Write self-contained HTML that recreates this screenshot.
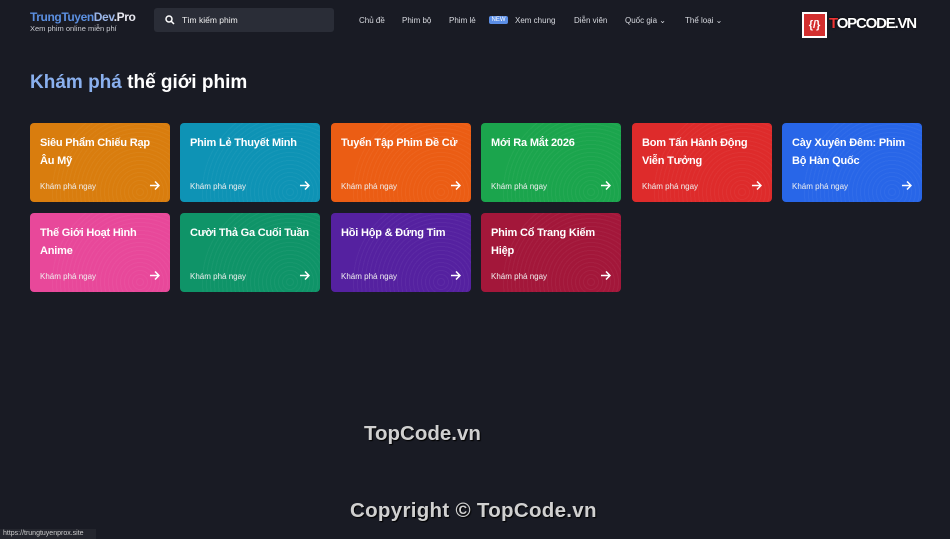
<!DOCTYPE html><html><head><meta charset="utf-8"><style>
*{margin:0;padding:0;box-sizing:border-box}
body{width:950px;height:539px;background:#191b24;font-family:"Liberation Sans",sans-serif;position:relative;overflow:hidden;color:#fff}
.a{position:absolute;white-space:nowrap}
.nav{font-size:8px;color:#d8dae0;top:16px}
.card{position:absolute;width:140px;height:79px;border-radius:4px;padding:11px 4px 11px 10px;overflow:hidden}
.card h3{font-size:11px;font-weight:bold;line-height:18px;color:#fff;white-space:nowrap;position:relative;letter-spacing:-.2px;z-index:1}
.card .k{position:absolute;left:10px;top:59px;font-size:8px;color:#f0f0f0;z-index:1}
.card svg{position:absolute;right:10px;top:58px;z-index:1}
.card:after{content:"";position:absolute;right:-60px;bottom:-80px;width:180px;height:180px;border-radius:50%;background:repeating-radial-gradient(circle,rgba(255,255,255,0) 0 3px,rgba(255,255,255,.04) 3px 4px)}
</style></head><body>
<div class="a" style="left:30px;top:10px;font-size:12px;font-weight:bold;letter-spacing:-.4px"><span style="color:#5b8fe0">TrungTuyen</span><span style="color:#9bb6e8">Dev</span><span style="color:#e8e8f0">.Pro</span></div>
<div class="a" style="left:30px;top:24px;font-size:7.5px;color:#c8cad0">Xem phim online miễn phí</div>
<div class="a" style="left:154px;top:8px;width:180px;height:24px;background:#2a2d37;border-radius:3px"></div>
<svg class="a" style="left:165px;top:15px" width="10" height="10" viewBox="0 0 10 10"><circle cx="4" cy="4" r="3" fill="none" stroke="#fff" stroke-width="1.5"/><path d="M6.3 6.3L9 9" stroke="#fff" stroke-width="1.5"/></svg>
<div class="a" style="left:182px;top:15px;font-size:8.5px;color:#f0f0f0">Tìm kiếm phim</div>
<div class="a nav" style="left:359px">Chủ đề</div>
<div class="a nav" style="left:402px">Phim bộ</div>
<div class="a nav" style="left:449px">Phim lẻ</div>
<div class="a" style="left:489px;top:16px;width:19px;height:8px;background:#5b8ee6;border-radius:2px;font-size:6px;color:#fff;text-align:center;line-height:8px">NEW</div>
<div class="a nav" style="left:515px">Xem chung</div>
<div class="a nav" style="left:574px">Diễn viên</div>
<div class="a nav" style="left:625px">Quốc gia ⌄</div>
<div class="a nav" style="left:685px">Thể loại ⌄</div>
<div class="a" style="left:802px;top:12px;width:25px;height:26px;background:#d32f2f;border:2px solid #fff;color:#fff;font-size:11px;font-weight:bold;text-align:center;line-height:22px">{/}</div>
<div class="a" style="left:829px;top:15px;font-size:15px;font-weight:bold;color:#fff;letter-spacing:-1.2px;text-shadow:0 0 2px #000"><span style="color:#e33">T</span>OPCODE.VN</div>
<div class="a" style="left:30px;top:72px;font-size:19px;font-weight:bold"><span style="color:#8ab0ee">Khám phá</span> thế giới phim</div>

<div class="card" style="left:30px;top:123px;background:#d97d0e"><h3>Siêu Phẩm Chiếu Rạp<br>Âu Mỹ</h3><div class="k">Khám phá ngay</div><svg width="10" height="9" viewBox="0 0 10 9"><path d="M0 4.5H9M5 .5L9 4.5 5 8.5" fill="none" stroke="#fff" stroke-width="1.5"/></svg></div>
<div class="card" style="left:180px;top:123px;background:#0e93b5"><h3>Phim Lẻ Thuyết Minh</h3><div class="k">Khám phá ngay</div><svg width="10" height="9" viewBox="0 0 10 9"><path d="M0 4.5H9M5 .5L9 4.5 5 8.5" fill="none" stroke="#fff" stroke-width="1.5"/></svg></div>
<div class="card" style="left:331px;top:123px;background:#eb5d14"><h3>Tuyển Tập Phim Đề Cử</h3><div class="k">Khám phá ngay</div><svg width="10" height="9" viewBox="0 0 10 9"><path d="M0 4.5H9M5 .5L9 4.5 5 8.5" fill="none" stroke="#fff" stroke-width="1.5"/></svg></div>
<div class="card" style="left:481px;top:123px;background:#1ba54d"><h3>Mới Ra Mắt 2026</h3><div class="k">Khám phá ngay</div><svg width="10" height="9" viewBox="0 0 10 9"><path d="M0 4.5H9M5 .5L9 4.5 5 8.5" fill="none" stroke="#fff" stroke-width="1.5"/></svg></div>
<div class="card" style="left:632px;top:123px;background:#de2b2b"><h3>Bom Tấn Hành Động<br>Viễn Tưởng</h3><div class="k">Khám phá ngay</div><svg width="10" height="9" viewBox="0 0 10 9"><path d="M0 4.5H9M5 .5L9 4.5 5 8.5" fill="none" stroke="#fff" stroke-width="1.5"/></svg></div>
<div class="card" style="left:782px;top:123px;background:#2866e8"><h3>Cày Xuyên Đêm: Phim<br>Bộ Hàn Quốc</h3><div class="k">Khám phá ngay</div><svg width="10" height="9" viewBox="0 0 10 9"><path d="M0 4.5H9M5 .5L9 4.5 5 8.5" fill="none" stroke="#fff" stroke-width="1.5"/></svg></div>
<div class="card" style="left:30px;top:213px;background:#e8489a"><h3>Thế Giới Hoạt Hình<br>Anime</h3><div class="k">Khám phá ngay</div><svg width="10" height="9" viewBox="0 0 10 9"><path d="M0 4.5H9M5 .5L9 4.5 5 8.5" fill="none" stroke="#fff" stroke-width="1.5"/></svg></div>
<div class="card" style="left:180px;top:213px;background:#0f9468"><h3>Cười Thả Ga Cuối Tuần</h3><div class="k">Khám phá ngay</div><svg width="10" height="9" viewBox="0 0 10 9"><path d="M0 4.5H9M5 .5L9 4.5 5 8.5" fill="none" stroke="#fff" stroke-width="1.5"/></svg></div>
<div class="card" style="left:331px;top:213px;background:#5521a0"><h3>Hồi Hộp &amp; Đứng Tim</h3><div class="k">Khám phá ngay</div><svg width="10" height="9" viewBox="0 0 10 9"><path d="M0 4.5H9M5 .5L9 4.5 5 8.5" fill="none" stroke="#fff" stroke-width="1.5"/></svg></div>
<div class="card" style="left:481px;top:213px;background:#a3173a"><h3>Phim Cổ Trang Kiếm<br>Hiệp</h3><div class="k">Khám phá ngay</div><svg width="10" height="9" viewBox="0 0 10 9"><path d="M0 4.5H9M5 .5L9 4.5 5 8.5" fill="none" stroke="#fff" stroke-width="1.5"/></svg></div>

<div class="a" style="left:364px;top:422px;font-size:20.5px;font-weight:bold;color:#d0d0d0;text-shadow:1px 1px 1px #000">TopCode.vn</div>
<div class="a" style="left:350px;top:499px;font-size:20.5px;font-weight:bold;color:#d0d0d0;text-shadow:1px 1px 1px #000;letter-spacing:.3px">Copyright © TopCode.vn</div>
<div class="a" style="left:0;top:529px;height:10px;width:96px;background:#24262e;font-size:7px;color:#ccc;padding-left:3px;line-height:10px">https://trungtuyenprox.site</div>
</body></html>
